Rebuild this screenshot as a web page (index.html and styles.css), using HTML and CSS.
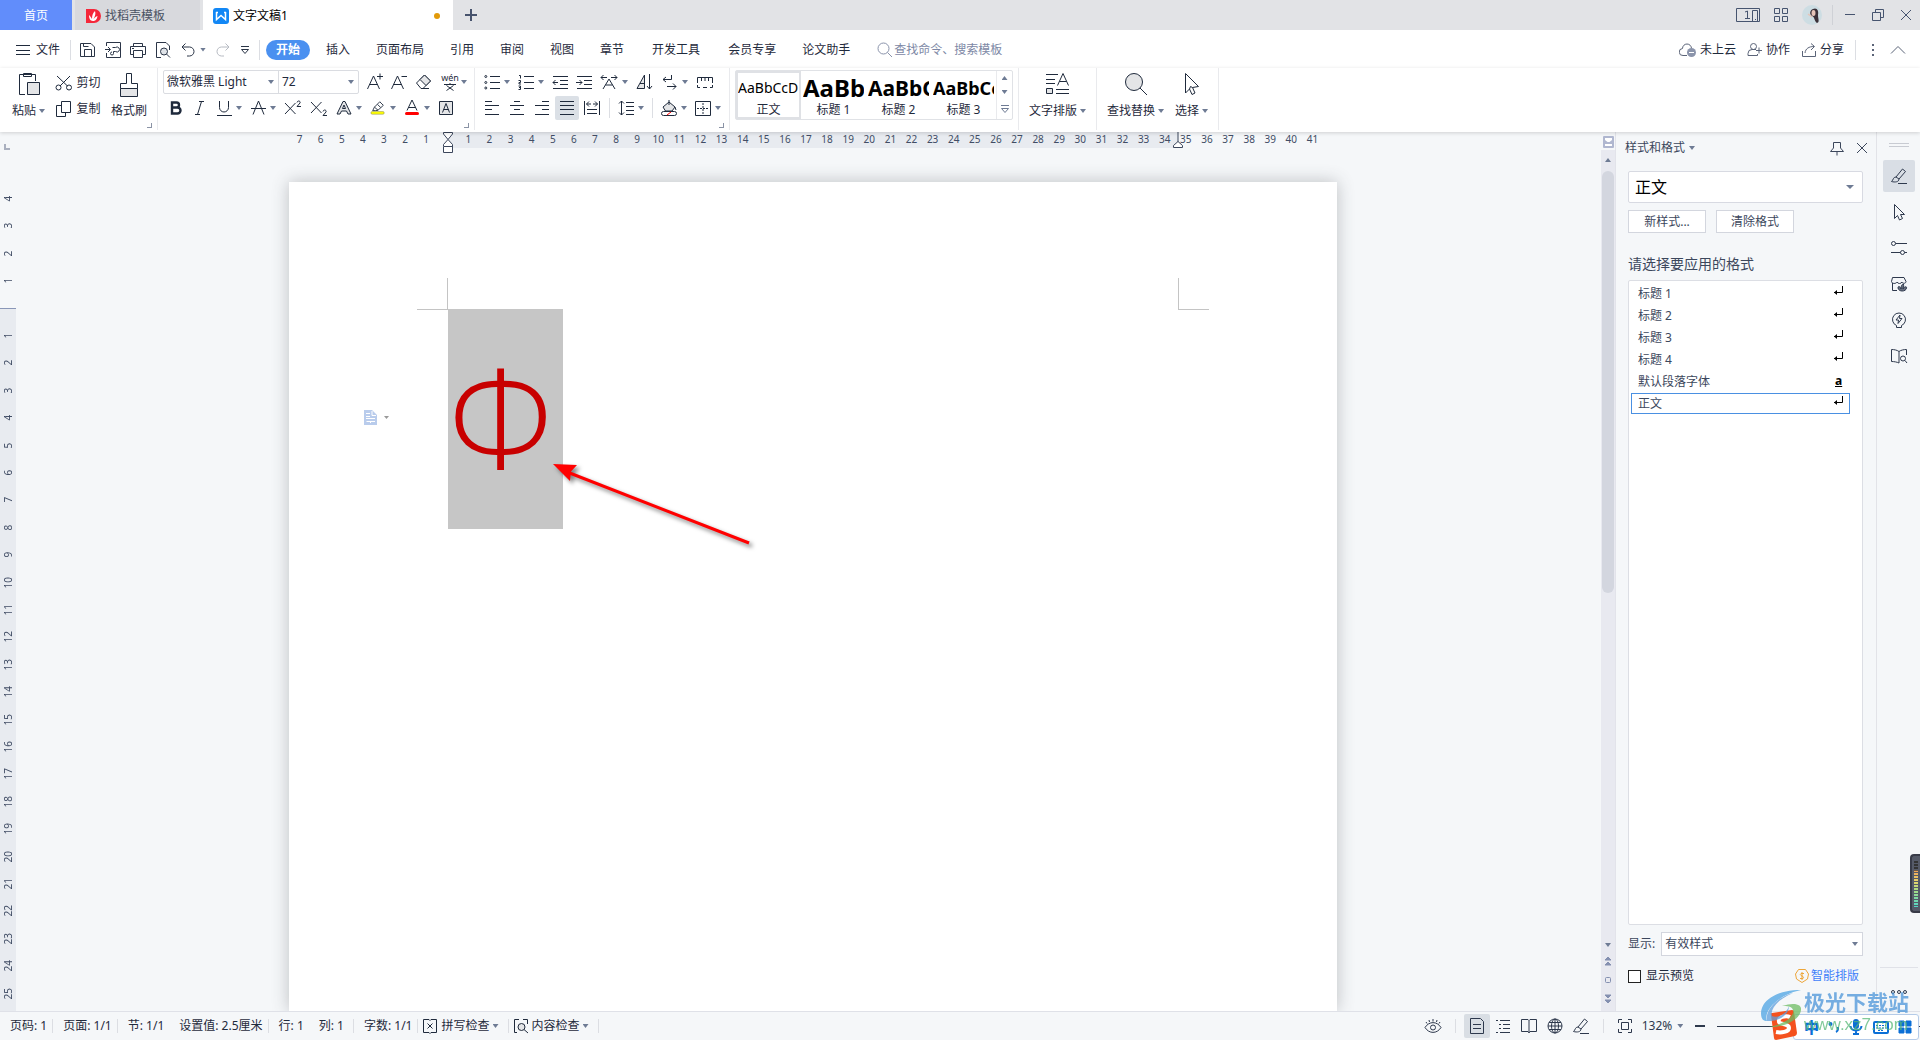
FILE: index.html
```html
<!DOCTYPE html>
<html lang="zh-CN">
<head>
<meta charset="utf-8">
<title>文字文稿1</title>
<link rel="stylesheet" href="styles.css">
</head>
<body>
<svg class="sprite" aria-hidden="true">
  <symbol id="save" viewBox="0 0 16 16"><path d="M.5 14.500V1.500H11L14.500 5V14.500zM4.500 14V7.500H11.500V14M3.500 1.500V4.500H8.500"/></symbol>
  <symbol id="pdf" viewBox="0 0 16 16"><path d="M1.500 4V.5H15.500V15.500H1.500V11M0 7.500H5M3 5L5.500 7.500 3 10M7.500 5.500H10.500A2.500 2.500 0 1 1 10.500 9.500H8.500V11.500A1.500 1.500 0 1 1 7 10"/></symbol>
  <symbol id="print" viewBox="0 0 16 16"><path d="M3.500 4.500V1.500H12.500V4.500M3.500 12.500H.5V4.500H15.500V12.500H12.500M3.500 8.500H12.500V15.500H3.500zM2 6.500H4"/></symbol>
  <symbol id="preview" viewBox="0 0 16 16"><path d="M6 15.500H1.500V.5H11L14.500 4V8M11.500 12L15 15.500"/><circle cx="9" cy="9.500" r="3.500" fill="#dfe3e8"/></symbol>
  <symbol id="undo" viewBox="0 0 16 16"><path d="M5.500 1.500L2 5 5.500 8.500M2 5H9.500A4.500 4.500 0 0 1 9.500 14H7"/></symbol>
  <symbol id="redo" viewBox="0 0 16 16"><path d="M10.500 1.500L14 5 10.500 8.500M14 5H6.500A4.500 4.500 0 0 0 6.500 14H9"/></symbol>
  <symbol id="more" viewBox="0 0 10 10"><path d="M1 1.500H9M1.500 4.500H8.500L5 8.500z"/></symbol>
  <symbol id="search" viewBox="0 0 16 16"><circle cx="6.500" cy="6.500" r="5.500"/><path d="M10.500 10.500L15 15"/></symbol>
  <symbol id="menu" viewBox="0 0 16 16"><path d="M1 3.500H15M1 8.500H15M1 12.500H15"/></symbol>
  <symbol id="cloud" viewBox="0 0 18 16"><path d="M8 13.500H4A3.500 3.500 0 0 1 3.500 6.500 4.500 4.500 0 0 1 12.500 6.500"/><circle cx="12.500" cy="10.500" r="4.500" fill="#8b94ab" stroke="none"/><path d="M10 10.500H15" stroke="#fff"/></symbol>
  <symbol id="collab" viewBox="0 0 16 16"><circle cx="6.500" cy="4.500" r="3"/><path d="M9 7.500H5A4 4 0 0 0 1 11.500V13.500H10.500V12M9 8.500H15M12 5.500V11.500"/></symbol>
  <symbol id="share" viewBox="0 0 16 16"><path d="M1.500 9V14.500H14.500V9M4 11C4.500 6.500 8 4.500 13 4.500M10 1.500L13.500 4.500 10 8"/></symbol>
  <symbol id="up" viewBox="0 0 16 16"><path d="M1 11.500L8 4.500 15 11.500"/></symbol>
  <symbol id="paste" viewBox="0 0 24 24"><path d="M8 22.500H2.500V2.500H18.500V9M6.500 1.500H14.500V4.500H6.500z"/><path d="M10.500 10.500H22.500V22.500H10.500z" fill="#e4e5e7"/></symbol>
  <symbol id="cut" viewBox="0 0 18 18"><path d="M2 2L12.500 12M15 2L5 12"/><circle cx="3.500" cy="13.500" r="2.500"/><circle cx="14" cy="13.500" r="2.500"/></symbol>
  <symbol id="copy" viewBox="0 0 16 16"><path d="M5.500.5H14.500V11.500H5.500zM5.500 4.500H.5V15.500H9.500V11.500"/></symbol>
  <symbol id="brush" viewBox="0 0 20 26"><path d="M7.500 1.500H12.500V11.500H18.500V16.500H1.500V11.500H7.500z"/><path d="M1.500 16.500H18.500V24.500H1.500z" fill="#e4e5e7"/></symbol>
  <symbol id="grow" viewBox="0 0 16 18"><path d="M.5 16L6.500 3 12.500 16M2.500 11.500H10.500M10 3.500H16M13 .5V6.500"/></symbol>
  <symbol id="shrink" viewBox="0 0 16 18"><path d="M.5 16L6.500 3 12.500 16M2.500 11.500H10.500M10.500 3.500H16"/></symbol>
  <symbol id="eraser" viewBox="0 0 18 18"><path d="M1.500 10L9.500 2 15.500 8 8 15.500H6z"/><path d="M5 6.500L9.500 2 15.500 8 11 12.500z" fill="#e4e5e7"/><path d="M8 15.500H14"/></symbol>
  <symbol id="bold" viewBox="0 0 16 16"><path d="M4 2.500H8.500A2.500 2.500 0 0 1 8.500 7.500H4zM4 7.500H9.500A3 3 0 0 1 9.500 13.500H4z" stroke-width="2.400"/></symbol>
  <symbol id="italic" viewBox="0 0 16 16"><path d="M7 1.500H12M3 14.500H8M9.500 1.500L5.500 14.500"/></symbol>
  <symbol id="under" viewBox="0 0 16 16"><path d="M3.500 1V7.500A4.500 4.500 0 0 0 12.500 7.500V1M1 15.500H16"/></symbol>
  <symbol id="strike" viewBox="0 0 16 16"><path d="M8.500 1L3 14.500M8.500 1L14 14.500M1 8.500H16"/></symbol>
  <symbol id="sup" viewBox="0 0 18 16"><path d="M1 3L11.500 14M11.500 3L1 14M13 2.500C13.500 0 17 1 16 3L13 6.500H17"/></symbol>
  <symbol id="sub" viewBox="0 0 18 16"><path d="M1 2L11.500 13M11.500 2L1 13M13 11.500C13.500 9 17 10 16 12L13 15.500H17"/></symbol>
  <symbol id="outline" viewBox="0 0 16 16"><path d="M1 14L7 1.500H9L15 14H12L10.500 11H5.500L4 14zM6.500 8.500H9.500L8 5z" fill="#e4e5e7"/></symbol>
  <symbol id="mark" viewBox="0 0 18 16"><path d="M3 11L5 7 11 1 15 5 9 10.500 6 11zM5 7L9 10.500M8.500 4L12 7.500"/><rect x="1" y="12" width="15" height="3" rx="1.500" fill="#ff0" stroke="#8b8b66" stroke-width=".6"/></symbol>
  <symbol id="color" viewBox="0 0 16 16"><path d="M3 10.500L8 0 13 10.500M4.500 7.500H11.500"/><rect x="1" y="12" width="14" height="3" rx="1.500" fill="red" stroke="none"/></symbol>
  <symbol id="shade" viewBox="0 0 16 16"><path d="M1.500 1.500H14.500V14.500H1.500z" fill="#e4e5e7"/><path d="M4.500 12.500L8 3.500 11.500 12.500M5.500 9.500H10.500"/></symbol>
  <symbol id="bullets" viewBox="0 0 16 16"><path d="M6 2.500H16M6 8.500H16M6 14.500H16"/><circle cx="1.800" cy="2.500" r="1"/><circle cx="1.800" cy="8.500" r="1"/><circle cx="1.800" cy="14" r="1"/></symbol>
  <symbol id="numbers" viewBox="0 0 16 16"><path d="M6 2.500H16M6 8.500H16M6 14.500H16M1 1.500H2.500V4.500M.5 6.500H2.500V8.500H1V10H3M.5 12H2.500V15.500H.5M1 13.500H2.500"/></symbol>
  <symbol id="outdent" viewBox="0 0 16 16"><path d="M1 2.500H16M8 6.500H16M8 10.500H16M1 14.500H16M1 8.500H6M3.500 6L1 8.500 3.500 11"/></symbol>
  <symbol id="indent" viewBox="0 0 16 16"><path d="M1 2.500H16M8 6.500H16M8 10.500H16M1 14.500H16M0 8.500H6M3.500 6L6 8.500 3.500 11"/></symbol>
  <symbol id="scale" viewBox="0 0 18 16"><path d="M3 15L9 5 15 15M5.500 11H12.500M1 3.500H7M3.500 1L1 3.500 3.500 6M11 3.500H17M14.500 1L17 3.500 14.500 6"/></symbol>
  <symbol id="sort" viewBox="0 0 18 16"><path d="M1 14.500L8.500 1V14.500zM4 9.500H8.500" fill="#e4e5e7"/><path d="M13.500 0V15M11 12L13.500 15 16 12"/></symbol>
  <symbol id="wrap" viewBox="0 0 16 16"><path d="M9.500 1V5.500H1M4 3L1 5.500 4 8M5 12.500H14M11 9.500L14 12.500 11 15.500"/></symbol>
  <symbol id="tabs" viewBox="0 0 18 16"><path d="M1.500 9V3.500H16.500V9M5.500 4V7M9 4V7M12.500 4V7M1.500 11V13.500H4M7 13.500H11M14 13.500H16.500V11"/></symbol>
  <symbol id="left" viewBox="0 0 16 16"><path d="M1 1.500H8M1 5.500H15M1 9.500H8M1 14.500H15"/></symbol>
  <symbol id="center" viewBox="0 0 16 16"><path d="M5 1.500H11M1 5.500H15M5 9.500H11M1 14.500H15"/></symbol>
  <symbol id="right" viewBox="0 0 16 16"><path d="M8 1.500H15M1 5.500H15M8 9.500H15M1 14.500H15"/></symbol>
  <symbol id="justify" viewBox="0 0 16 16"><path d="M1 1.500H15M1 5.500H15M1 9.500H15M1 14.500H15"/></symbol>
  <symbol id="distribute" viewBox="0 0 16 16"><path d="M.5 1V15M15.500 1V15M3 9.500H13M3 13.500H13M2.500 4H7M5 1.500L2.500 4 5 6.500M9 4H13.500M11 1.500L13.500 4 11 6.500"/></symbol>
  <symbol id="spacing" viewBox="0 0 16 16"><path d="M8 2.500H16M8 6.500H16M8 10.500H16M8 14.500H16M3.500 1V15M1 3.500L3.500 1 6 3.500M1 12.500L3.500 15 6 12.500"/></symbol>
  <symbol id="bucket" viewBox="0 0 16 16"><path d="M2 7L8 2 14 7 11 11H4.500zM8 5V0M14 7L15 10" fill="#e4e5e7"/><rect x=".5" y="11.500" width="15" height="4" rx="2" fill="#fff"/><path d="M6 15L10 12" stroke="red"/></symbol>
  <symbol id="border" viewBox="0 0 16 16"><path d="M.5 1.500H15.500V15.500H.5z"/><path d="M8 3V14M2 8.500H14" stroke-dasharray="2 1"/></symbol>
  <symbol id="typeset" viewBox="0 0 26 24"><path d="M1 2.500H13M1 7.500H10M1 11.500H10M12.500 13.500L18 1.500 23.500 13.500M14.500 9.500H21.500M11 17.500H24M11 21.500H24"/><path d="M1.500 16.500H7.500V21.500H1.500z" fill="#e4e5e7"/></symbol>
  <symbol id="find" viewBox="0 0 24 24"><circle cx="10" cy="10" r="8.500" fill="#e4e5e7"/><path d="M16 16L23 23"/></symbol>
  <symbol id="select" viewBox="0 0 18 24"><path d="M2.500 1.500V21L6.500 17 9 22.500 12 21 9.500 15.500 15.500 14.500z" fill="#fff"/><path d="M6.500 17L7.500 14.500 9.500 15.500"/></symbol>
  <symbol id="pin" viewBox="0 0 16 16"><path d="M4.500 2.500H11.500V8L14.500 11.500H1.500L4.500 8zM8 11.500V15.500"/></symbol>
  <symbol id="close" viewBox="0 0 12 12"><path d="M1 1L11 11M11 1L1 11"/></symbol>
  <symbol id="enter" viewBox="0 0 12 10"><path d="M9.500 0V6.500H1"/><path d="M1 6.500L4 4V9z" fill="#000" stroke="none"/></symbol>
  <symbol id="pen" viewBox="0 0 18 18"><path d="M6 10L12.500 2 15.500 4.500 9 12M6 10C3 10 3.500 13 1.500 14.500 5 15.500 9 15 9 12zM8 16.500H17"/></symbol>
  <symbol id="pointer" viewBox="0 0 18 18"><path d="M4.500 1.500V15.500L7.500 12.500 9.500 17 12.500 15.500 10.500 11.500H14.500z"/></symbol>
  <symbol id="sliders" viewBox="0 0 18 18"><circle cx="3.500" cy="4.500" r="2"/><circle cx="12.500" cy="13.500" r="2"/><path d="M5.500 4.500H17M1 13.500H10.500M14.500 13.500H17"/></symbol>
  <symbol id="shop" viewBox="0 0 18 18"><path d="M2.500 8V15.500H7M2.500 2.500H14L16 6.500C16 8.500 13 9 12 7 11 9 8 9 7 7 6 9 2 9 1.500 6.500z"/><path d="M8 13C8 10.500 10 11 11 14 11 10 12.500 9 13.500 9 14 11 13 13 13 14 14 11.500 17 11 16.500 13 16 17 8.500 17 8 13z" fill="#6a7180"/></symbol>
  <symbol id="bulb" viewBox="0 0 18 18"><path d="M6.500 14.500A6.500 6.500 0 1 1 11.500 14.500V16.500H6.500zM10 4L6 9H8.500L8 12.500 12 7.500H9.500z"/></symbol>
  <symbol id="booksearch" viewBox="0 0 18 18"><path d="M9 4.500C7 3 4 2.500 1.500 2.500V14.500C4 14.500 7 15 9 16V4.500C11 3 14 2.500 16.500 2.500V8"/><circle cx="13" cy="11.500" r="2.500"/><path d="M15 13.500L17 16"/></symbol>
  <symbol id="spell" viewBox="0 0 16 16"><path d="M7 1.500H1.500V14.500H7L8 15.500 9 14.500H14.500V1.500H9L8 2.500zM5.500 5.500L10.500 10.500M10.500 5.500L5.500 10.500"/></symbol>
  <symbol id="check" viewBox="0 0 16 16"><path d="M4 14.500H1.500V1.500H6M10 1.500H14.500V6M11 11.500L15 15"/><circle cx="8.500" cy="9" r="3.500" fill="#e4e5e7"/></symbol>
  <symbol id="eye" viewBox="0 0 18 16"><path d="M1 9.500C5 3 13 3 17 9.500 13 16 5 16 1 9.500zM2 4L3 5.500M9 1V3.500M16 4L15 5.500M5 2L5.500 4M13 2L12.500 4"/><circle cx="9" cy="9.500" r="2.500"/></symbol>
  <symbol id="doc" viewBox="0 0 16 16"><path d="M1.500.5H11.500L14.500 3.500V15.500H1.500zM4 6.500H12M4 10.500H12"/></symbol>
  <symbol id="list" viewBox="0 0 16 16"><path d="M1 2.500H3M5 2.500H15M4 6.500H6M8 6.500H15M4 10.500H6M8 10.500H15M1 14.500H3M5 14.500H15"/></symbol>
  <symbol id="book" viewBox="0 0 16 16"><path d="M8 2.500L7 1.500H.5V13.500H7L8 15 9 13.500H15.500V1.500H9zV14"/></symbol>
  <symbol id="globe" viewBox="0 0 16 16"><circle cx="8" cy="8" r="7"/><ellipse cx="8" cy="8" rx="3.500" ry="7"/><path d="M1 8H15M2 4.500H14M2 11.500H14M8 1V15"/></symbol>
  <symbol id="fit" viewBox="0 0 16 16"><path d="M1.500 5V1.500H5M11 1.500H14.500V5M14.500 11V14.500H11M5 14.500H1.500V11M4.500 4.500H11.500V11.500H4.500z"/></symbol>
</svg>

<div class="app">
  <header class="titlebar">
    <button class="tab home">首页</button>
    <button class="tab docer"><svg class="i16" viewBox="0 0 16 16"><path d="M1 1H9A7 7 0 0 1 9 15H1z" fill="#f5273a" stroke="none"/><path d="M4 7C5 8 6 9 7 11 7 7 8 5 10 3 11 6 10 8 8.500 11 10 9 12 8 12.500 8 12 12 10 13 8 13 5 13 4 10 4 7z" fill="#fff" stroke="none"/></svg>找稻壳模板</button>
    <button class="tab current"><svg class="i16" viewBox="0 0 16 16"><rect width="16" height="16" rx="3" fill="#1287f5" stroke="none"/><path d="M3.500 4V11.500L8 7.500 12.500 11.500V4M3 4.500H5M11 4.500H13" stroke="#fff" stroke-width="1.500"/></svg>文字文稿1<i class="dirty"></i></button>
    <button class="plus" aria-label="新建"><svg class="i12" viewBox="0 0 12 12"><path d="M6 0V12M0 6H12" stroke-width="2"/></svg></button>
    <div class="window">
      <svg width="24" height="14" viewBox="0 0 24 14"><path d="M.5.5H23.500V13.500H.5zM16.500 13V2.500H21.500V13M19 11.500H20M9 4L11.500 3V10.500M9 10.500H14"/></svg>
      <svg class="grid" width="14" height="14" viewBox="0 0 14 14"><path d="M.5.5H5.500V5.500H.5zM8.500.5H13.500V5.500H8.500zM.5 8.500H5.500V13.500H.5zM8.500 8.500H13.500V13.500H8.500z"/></svg>
      <svg width="20" height="20" viewBox="0 0 20 20"><circle cx="10" cy="10" r="10" fill="#cddde3" stroke="none"/><path d="M11 4C15 2 17 6 16 10 16 14 18 17 15 18 12 16 13 12 10 11 7 9 8 5 11 4z" fill="#3a3038" stroke="none"/><ellipse cx="11.500" cy="8" rx="2" ry="3" fill="#e6c4b8" stroke="none"/><path d="M6 9L10 12" stroke="#e6c4b8" stroke-width="1.500"/></svg>
      <div class="controls">
        <button aria-label="最小化"><svg class="i12" viewBox="0 0 12 12"><path d="M1 5.500H11"/></svg></button>
        <button aria-label="还原"><svg class="i12" viewBox="0 0 12 12"><path d="M3.500 3.500V.5H11.500V8.500H8.500M.5 3.500H8.500V11.500H.5z"/></svg></button>
        <button aria-label="关闭"><svg class="i12"><use href="#close"/></svg></button>
      </div>
    </div>
  </header>

  <nav class="menubar">
    <button class="file"><svg class="i16"><use href="#menu"/></svg>文件</button>
    <i class="bar"></i>
    <div class="quick">
      <button aria-label="保存"><svg class="i16"><use href="#save"/></svg></button>
      <button aria-label="输出为PDF"><svg class="i16"><use href="#pdf"/></svg></button>
      <button aria-label="打印"><svg class="i16"><use href="#print"/></svg></button>
      <button aria-label="打印预览"><svg class="i16"><use href="#preview"/></svg></button>
      <button aria-label="撤销"><svg class="i16"><use href="#undo"/></svg><i class="caret"></i></button>
      <button class="off" aria-label="恢复"><svg class="i16"><use href="#redo"/></svg></button>
      <button aria-label="更多"><svg width="10" height="10"><use href="#more"/></svg></button>
    </div>
    <i class="bar"></i>
    <div class="tabs">
      <button class="on">开始</button><button>插入</button><button>页面布局</button><button>引用</button><button>审阅</button><button>视图</button><button>章节</button><button class="roomy">开发工具</button><button>会员专享</button><button>论文助手</button>
    </div>
    <label class="search"><svg class="i16"><use href="#search"/></svg><input type="text" placeholder="查找命令、搜索模板" aria-label="查找命令"></label>
    <div class="cloud">
      <button><svg width="18" height="16"><use href="#cloud"/></svg>未上云</button>
      <button><svg class="i16"><use href="#collab"/></svg>协作</button>
      <button><svg class="i16"><use href="#share"/></svg>分享</button>
      <i class="bar"></i>
      <button class="dots" aria-label="选项"><i></i><i></i><i></i></button>
      <button aria-label="折叠功能区"><svg class="i16"><use href="#up"/></svg></button>
    </div>
  </nav>

  <section class="ribbon">
    <div class="group clip">
      <button class="big"><svg class="i24"><use href="#paste"/></svg><span>粘贴<i class="caret"></i></span></button>
      <div class="stack"><button><svg width="18" height="18"><use href="#cut"/></svg>剪切</button><button><svg width="18" height="16"><use href="#copy"/></svg>复制</button></div>
      <button class="big"><svg width="20" height="26"><use href="#brush"/></svg><span>格式刷</span></button>
      <i class="launch"></i>
    </div>
    <div class="group font">
      <div class="row">
        <div class="combos">
          <span class="pick name"><select aria-label="字体"><option>微软雅黑 Light</option></select></span>
          <span class="pick size"><select aria-label="字号"><option>72</option></select></span>
        </div>
        <button class="tool" aria-label="增大字号"><svg width="16" height="18"><use href="#grow"/></svg></button>
        <button class="tool" aria-label="减小字号"><svg width="16" height="18"><use href="#shrink"/></svg></button>
        <button class="tool" aria-label="清除格式"><svg class="i18"><use href="#eraser"/></svg></button>
        <button class="tool pin" aria-label="拼音指南"><span class="pinyin"><b>wén</b><svg width="12" height="8" viewBox="0 0 12 8"><path d="M6 0V1.500M0 1.500H12M2.500 2.500L9.500 7.500M9.500 2.500L2.500 7.500"/></svg></span><i class="caret"></i></button>
      </div>
      <div class="row second">
        <button class="tool" aria-label="加粗"><svg class="i16"><use href="#bold"/></svg></button>
        <button class="tool" aria-label="倾斜"><svg class="i16"><use href="#italic"/></svg></button>
        <button class="tool" aria-label="下划线"><svg class="i16"><use href="#under"/></svg><i class="caret"></i></button>
        <button class="tool" aria-label="删除线"><svg class="i16"><use href="#strike"/></svg><i class="caret"></i></button>
        <button class="tool" aria-label="上标"><svg width="18" height="16"><use href="#sup"/></svg></button>
        <button class="tool" aria-label="下标"><svg width="18" height="16"><use href="#sub"/></svg></button>
        <button class="tool" aria-label="文字效果"><svg class="i16"><use href="#outline"/></svg><i class="caret"></i></button>
        <button class="tool" aria-label="突出显示"><svg class="i16"><use href="#mark"/></svg><i class="caret"></i></button>
        <button class="tool" aria-label="字体颜色"><svg class="i16"><use href="#color"/></svg><i class="caret"></i></button>
        <button class="tool" aria-label="字符底纹"><svg class="i16"><use href="#shade"/></svg></button>
      </div>
      <i class="launch"></i>
    </div>
    <div class="group para">
      <div class="row inset">
        <button class="tool" aria-label="项目符号"><svg class="i16"><use href="#bullets"/></svg><i class="caret"></i></button>
        <button class="tool" aria-label="编号"><svg class="i16"><use href="#numbers"/></svg><i class="caret"></i></button>
        <button class="tool" aria-label="减少缩进"><svg class="i16"><use href="#outdent"/></svg></button>
        <button class="tool" aria-label="增加缩进"><svg class="i16"><use href="#indent"/></svg></button>
        <button class="tool" aria-label="中文版式"><svg width="18" height="16"><use href="#scale"/></svg><i class="caret"></i></button>
        <button class="tool" aria-label="排序"><svg width="18" height="16"><use href="#sort"/></svg></button>
        <button class="tool" aria-label="换行"><svg class="i16"><use href="#wrap"/></svg><i class="caret"></i></button>
        <button class="tool" aria-label="制表位"><svg width="18" height="16"><use href="#tabs"/></svg></button>
      </div>
      <div class="row">
        <div class="aligns">
          <button aria-label="左对齐"><svg class="i16"><use href="#left"/></svg></button>
          <button aria-label="居中"><svg class="i16"><use href="#center"/></svg></button>
          <button aria-label="右对齐"><svg class="i16"><use href="#right"/></svg></button>
          <button class="on" aria-label="两端对齐"><svg class="i16"><use href="#justify"/></svg></button>
          <button aria-label="分散对齐"><svg class="i16"><use href="#distribute"/></svg></button>
          <i class="bar"></i>
        </div>
        <button class="tool" aria-label="行距"><svg class="i16"><use href="#spacing"/></svg><i class="caret"></i></button>
        <i class="bar"></i>
        <button class="tool" aria-label="底纹颜色"><svg class="i16"><use href="#bucket"/></svg><i class="caret"></i></button>
        <button class="tool" aria-label="边框"><svg class="i16"><use href="#border"/></svg><i class="caret"></i></button>
      </div>
      <i class="launch"></i>
    </div>
    <div class="group styles">
      <div class="gallery">
        <button class="on"><span class="p0">AaBbCcD</span>正文</button>
        <button><span class="p1">AaBb</span>标题 1</button>
        <button><span class="p2">AaBbC</span>标题 2</button>
        <button><span class="p3">AaBbCc</span>标题 3</button>
        <div class="scroller"><i class="caret flip"></i><i class="caret"></i><svg width="10" height="10"><use href="#more"/></svg></div>
      </div>
    </div>
    <div class="group"><button class="big"><svg width="26" height="24"><use href="#typeset"/></svg><span>文字排版<i class="caret"></i></span></button></div>
    <div class="group"><button class="big"><svg class="i24"><use href="#find"/></svg><span>查找替换<i class="caret"></i></span></button><button class="big"><svg width="18" height="24"><use href="#select"/></svg><span>选择<i class="caret"></i></span></button></div>
  </section>

  <main class="workspace">
    <aside class="vruler">
      <i class="corner"></i>
      <div class="vticks"><b>4</b><b>3</b><b>2</b><b>1</b><b></b><b>1</b><b>2</b><b>3</b><b>4</b><b>5</b><b>6</b><b>7</b><b>8</b><b>9</b><b>10</b><b>11</b><b>12</b><b>13</b><b>14</b><b>15</b><b>16</b><b>17</b><b>18</b><b>19</b><b>20</b><b>21</b><b>22</b><b>23</b><b>24</b><b>25</b></div>
    </aside>
    <section class="editor">
      <div class="hruler">
        <div class="hticks"><b>7</b><b>6</b><b>5</b><b>4</b><b>3</b><b>2</b><b>1</b><b></b><b>1</b><b>2</b><b>3</b><b>4</b><b>5</b><b>6</b><b>7</b><b>8</b><b>9</b><b>10</b><b>11</b><b>12</b><b>13</b><b>14</b><b>15</b><b>16</b><b>17</b><b>18</b><b>19</b><b>20</b><b>21</b><b>22</b><b>23</b><b>24</b><b>25</b><b>26</b><b>27</b><b>28</b><b>29</b><b>30</b><b>31</b><b>32</b><b>33</b><b>34</b><b>35</b><b>36</b><b>37</b><b>38</b><b>39</b><b>40</b><b>41</b></div>
        <svg class="first" width="10" height="22" viewBox="0 0 10 22"><path d="M.5.5H9.500V2L5 7.500.5 2zM.5 14V12.500L5 7.500 9.500 12.500V14.500H.5V20.500H9.500V14" fill="#fff"/></svg>
        <svg class="last" width="10" height="16" viewBox="0 0 10 16"><path d="M5 0V10"/><path d="M.5 15.500V13.500L5 9.500 9.500 13.500V15.500z" fill="#fff"/></svg>
      </div>
      <article class="page">
        <i class="crop tl"></i><i class="crop tr"></i>
        <svg class="pasteopt" width="26" height="16" viewBox="0 0 26 16"><path d="M0 0H8L13 5V15H0z" fill="#b9ccec" stroke="none"/><path d="M2 3.500H6M2 6.500H6M2 8.500H11M2.500 11.500H11M6.500 11V13M8 1V5.500H12" stroke="#fff"/><path d="M20 6H25L22.500 9z" fill="#999" stroke="none"/></svg>
        <p class="text"><span class="picked">Ф</span></p>
        <svg class="arrow" width="210" height="100" viewBox="0 0 210 100"><path d="M14 14L201 87" stroke="#f00" stroke-width="3"/><path d="M5 8L29 9 23 15.500 22 25z" fill="#f00" stroke="none"/></svg>
      </article>
    </section>
    <div class="vscroll">
      <svg width="11" height="12" viewBox="0 0 11 12"><rect width="11" height="12" rx="1" fill="#b0b7d0" stroke="none"/><path d="M2 2H9V4L6.500 6H4.500L2 4zM2 8H9V10H2z" fill="#fff" stroke="none"/></svg>
      <div class="track"><i class="caret flip"></i><i class="thumb"></i><i class="caret"></i>
        <svg class="i10" viewBox="0 0 10 10"><path d="M2 4L5 1 8 4zM2 9L5 6 8 9z" fill="#8490b0"/></svg>
        <svg class="i10" viewBox="0 0 10 10"><rect x="2.500" y="2.500" width="5" height="5" rx="1"/></svg>
        <svg class="i10" viewBox="0 0 10 10"><path d="M2 1L5 4 8 1zM2 6L5 9 8 6z" fill="#8490b0"/></svg></div>
    </div>
    <aside class="panel">
      <header><h2>样式和格式<i class="caret"></i></h2><button aria-label="固定"><svg class="i16"><use href="#pin"/></svg></button><button aria-label="关闭窗格"><svg class="i12"><use href="#close"/></svg></button></header>
      <span class="pick current-style"><select aria-label="当前样式"><option>正文</option></select></span>
      <div class="actions"><button>新样式...</button><button>清除格式</button></div>
      <h3>请选择要应用的格式</h3>
      <ul class="stylelist">
        <li>标题 1<svg width="12" height="10"><use href="#enter"/></svg></li>
        <li>标题 2<svg width="12" height="10"><use href="#enter"/></svg></li>
        <li>标题 3<svg width="12" height="10"><use href="#enter"/></svg></li>
        <li>标题 4<svg width="12" height="10"><use href="#enter"/></svg></li>
        <li>默认段落字体<b>a</b></li>
        <li class="on">正文<svg width="12" height="10"><use href="#enter"/></svg></li>
      </ul>
      <div class="show"><label for="show">显示:</label><span class="pick"><select id="show"><option>有效样式</option></select></span></div>
      <div class="foot"><label><input type="checkbox">显示预览</label><a href="#smart"><svg width="14" height="14" viewBox="0 0 14 14"><path d="M3.500.5H10.500L13.500 5 12.500 10 7 13.500 1.500 10 .5 5z" stroke="#eda63a"/><path d="M9 4.500H6Q4.500 5.500 6 6.500L8 7.500Q9 9 8 9.500H5M7 3V11" stroke="#eda63a"/></svg>智能排版</a></div>
    </aside>
    <aside class="rail">
      <i class="grip"></i>
      <button class="on" aria-label="样式"><svg class="i18"><use href="#pen"/></svg></button>
      <button aria-label="选择"><svg class="i18"><use href="#pointer"/></svg></button>
      <button aria-label="属性"><svg class="i18"><use href="#sliders"/></svg></button>
      <button aria-label="稻壳资源"><svg class="i18"><use href="#shop"/></svg></button>
      <button aria-label="推荐"><svg class="i18"><use href="#bulb"/></svg></button>
      <button aria-label="查找"><svg class="i18"><use href="#booksearch"/></svg></button>
      <button class="end" aria-label="更多"><svg class="i18" viewBox="0 0 18 18"><circle cx="3" cy="9" r="1.500"/><circle cx="9" cy="9" r="1.500"/><circle cx="15" cy="9" r="1.500"/></svg></button>
    </aside>
  </main>

  <footer class="status">
    <span class="cut">页码: 1</span><span class="cut">页面: 1/1</span><span>节: 1/1</span><span class="cut">设置值: 2.5厘米</span><span>行: 1</span><span class="cut loose">列: 1</span><span class="cut">字数: 1/1</span>
    <button class="cut"><svg class="i16"><use href="#spell"/></svg>拼写检查<i class="caret"></i></button>
    <button class="cut"><svg class="i16"><use href="#check"/></svg>内容检查<i class="caret"></i></button>
    <div class="views">
      <button aria-label="护眼模式"><svg width="18" height="16"><use href="#eye"/></svg></button>
      <i class="bar"></i>
      <button class="on" aria-label="页面视图"><svg class="i16"><use href="#doc"/></svg></button>
      <button aria-label="大纲"><svg class="i16"><use href="#list"/></svg></button>
      <button aria-label="阅读版式"><svg class="i16"><use href="#book"/></svg></button>
      <button aria-label="Web版式"><svg class="i16"><use href="#globe"/></svg></button>
      <button aria-label="写作模式"><svg class="i18"><use href="#pen"/></svg></button>
      <i class="bar"></i>
      <button aria-label="最佳显示比例"><svg class="i16"><use href="#fit"/></svg></button>
      <button class="zoom">132%<i class="caret"></i></button>
      <button class="minus" aria-label="缩小"><i></i></button>
      <i class="slider"></i>
    </div>
  </footer>
</div>

<div class="meter"></div>
<div class="ime">
  <svg width="30" height="30" viewBox="0 0 30 30"><path d="M3 5Q2 3 4 3L24 0Q26 0 26 2L29 23Q29 25 27 26L8 30Q6 30 6 28z" fill="#f4511e" stroke="none"/><path d="M22 7C18 5 9 7 11 12 12 15 21 13 21 18 21 22 13 23 8 22" stroke="#fff" stroke-width="4"/></svg>
  <div class="keys"><b>中</b>
    <svg class="i12" viewBox="0 0 12 12"><circle cx="2.500" cy="3" r="2" fill="#0b6fd6" stroke="none"/><path d="M10 6V8Q10 10 8 11" stroke="#0b6fd6" stroke-width="2"/></svg>
    <svg class="i16" viewBox="0 0 16 16"><rect x="5" y="0" width="6" height="10" rx="3" fill="#0b6fd6" stroke="none"/><path d="M2.500 7C3 13 13 13 13.500 7M8 12V16M5 15H11" stroke="#0b6fd6" stroke-width="2"/></svg>
    <svg class="i16" viewBox="0 0 16 16"><rect x="1" y="3" width="14" height="11" rx="1" stroke="#0b6fd6" stroke-width="2"/><path d="M3 6.500H13M3 9H13M5 11.500H11" stroke="#0b6fd6" stroke-dasharray="2 1"/></svg>
    <svg width="14" height="14" viewBox="0 0 14 14"><path d="M1 1H6V6H1zM8 1H13V6H8zM1 8H6V13H1zM8 8H13V13H8z" fill="#0b6fd6" stroke="#0b6fd6"/></svg></div>
</div>
<div class="brand">
  <svg width="42" height="42" viewBox="0 0 42 42"><path d="M41 1C20 1 2 9 1 24 1 31 4 32 7 32 3 21 20 5 41 1z" fill="#4ba3e3" stroke="none"/><path d="M33 4C18 10 10 20 12 27 18 30 27 24 29 17 29 27 17 33 7 32 5 20 18 8 33 4z" fill="#5e9fdc" stroke="none"/><path d="M22 17C34 13 42 15 41 21 40 31 23 39 9 38 22 36 35 28 33 21 32 17 27 17 22 17z" fill="#6cbc62" stroke="none"/></svg>
  <div><strong>极光下载站</strong><em>www.xz7.com</em></div>
</div>
</body>
</html>
```
FILE: styles.css
```css
* { box-sizing: border-box; }
body {
  margin: 0;
  font: 12px/16px "Noto Sans", "Noto Sans CJK SC", sans-serif;
  color: #1f2a3c;
  overflow: hidden;
}
button, input, select { font: inherit; color: inherit; border: 0; background: none; padding: 0; margin: 0; border-radius: 0; outline: 0; }
button { display: flex; align-items: center; white-space: nowrap; }
h2, h3, ul, p { margin: 0; padding: 0; font-size: 12px; font-weight: 400; list-style: none; }
i, em { font-style: normal; }
svg { display: block; flex: none; fill: none; stroke: currentColor; }
.sprite { display: none; }
.i10 { width: 10px; height: 10px; }
.i12 { width: 12px; height: 12px; }
.i16 { width: 16px; height: 16px; }
.i18 { width: 18px; height: 18px; }
.i24 { width: 24px; height: 24px; }

.app { display: flex; flex-direction: column; height: 100vh; }
.caret { flex: none; width: 6px; height: 4px; background: #6e7b94; clip-path: polygon(0 0, 100% 0, 50% 100%); }
.caret.flip { transform: scaleY(-1); }
.bar { flex: none; width: 1px; height: 20px; background: #dcdee3; }

/* title bar */
.titlebar { display: flex; height: 30px; background: #e2e3e6; }
.tab { gap: 4px; padding: 2px 10px 0; }
.home { width: 72px; justify-content: center; background: #618dfb; color: #fff; }
.docer { width: 125px; margin: 0 3px; background: #d8d9dd; color: #4a5263; }
.current { width: 250px; background: #fff; color: #000; }
.dirty { width: 6px; height: 6px; margin: 0 3px 0 auto; border-radius: 50%; background: #e29a0a; }
.plus { width: 36px; justify-content: center; color: #47536d; }
.window { display: flex; align-items: center; gap: 10px; margin-left: auto; color: #46546f; }
.window .grid { margin: 0 4px; }
.controls { display: flex; height: 20px; padding-left: 3px; border-left: 1px solid #cfd1d6; }
.controls button { width: 28px; justify-content: center; }

/* menu bar */
.menubar { display: flex; align-items: center; height: 38px; background: #fff; padding: 1px 0 0 15px; }
.file { gap: 5px; margin-right: 10px; }
.quick { display: flex; align-items: center; gap: 9px; padding: 0 9px; color: #2b3547; }
.quick button { gap: 4px; }
.quick .off { color: #b6bac2; }
.tabs { display: flex; align-items: center; gap: 26px; padding-left: 6px; }
.tabs .on { width: 44px; height: 20px; margin-right: -10px; justify-content: center; border-radius: 10px; background: #4a90f0; color: #fff; font-weight: 700; }
.tabs .roomy { padding: 0 2px; }
.search { display: flex; align-items: center; gap: 1px; margin-left: 27px; color: #8a93ab; }
.search input { width: 120px; }
.search input::placeholder { color: #7d88a5; opacity: 1; }
.cloud { display: flex; align-items: center; gap: 11px; margin-left: auto; padding-right: 14px; }
.cloud button { gap: 3px; }
.cloud svg { color: #5b6478; }
.cloud .dots { flex-direction: column; width: 12px; }
.dots i { width: 2px; height: 2px; background: #5b6478; }

/* ribbon */
.ribbon { position: relative; z-index: 2; display: flex; height: 64px; background: #fff; box-shadow: 0 1px 4px rgba(0, 0, 0, .16); }
.group { position: relative; display: flex; height: 62px; padding: 0 10px; border-right: 1px solid #e9eaed; }
.clip { width: 158px; padding: 0 10px 0 12px; justify-content: space-between; }
.big { flex-direction: column; height: 51px; padding-top: 4px; justify-content: space-between; align-items: center; }
.big span { display: flex; align-items: center; gap: 3px; }
.group .big + .big { margin-left: 11px; }
.stack { display: flex; flex-direction: column; gap: 8px; padding-top: 6px; }
.stack button { gap: 3px; height: 18px; }
.launch { position: absolute; right: 5px; bottom: 2px; width: 5px; height: 5px; border: solid #8a93a5; border-width: 0 1px 1px 0; }
.font, .para { flex-direction: column; }
.font { width: 317px; padding: 0 5px; }
.para { width: 255px; padding: 0 5px; }
.row { display: flex; align-items: center; gap: 8px; height: 24px; margin-top: 2px; }
.row.second { padding-left: 5px; }
.row.inset { padding-left: 4px; }
.tool { gap: 4px; }
.tool.pin { gap: 2px; }
.combos { display: flex; height: 24px; border: 1px solid #dadce1; border-radius: 2px; }
.pick { position: relative; display: flex; }
.pick::after { content: ""; position: absolute; right: 4px; top: calc(50% - 2px); width: 6px; height: 4px; background: #6e7b94; clip-path: polygon(0 0, 100% 0, 50% 100%); pointer-events: none; }
.pick select { appearance: none; width: 100%; padding-left: 3px; }
.name { width: 115px; border-right: 1px solid #dadce1; }
.size { width: 79px; }
.pinyin { display: flex; flex-direction: column; align-items: center; width: 18px; }
.pinyin b { font-size: 9px; line-height: 10px; font-weight: 400; }
.aligns { display: flex; align-items: center; gap: 1px; }
.aligns button { width: 24px; height: 24px; justify-content: center; }
.aligns .bar { margin-left: 4px; }
.aligns .on { background: #dbe0e6; border-radius: 2px; }
.styles { padding: 0 5px; }
.gallery { display: flex; height: 50px; margin-top: 2px; border: 1px solid #e0e2e6; border-radius: 2px; }
.gallery button { flex-direction: column; width: 65px; height: 48px; overflow: hidden; justify-content: flex-end; padding-bottom: 1px; }
.gallery button span { width: 61px; overflow: hidden; line-height: 28px; height: 28px; color: #000; text-align: left; }
.gallery .on { box-shadow: inset 0 0 0 2px #dfe1e5; }
.gallery .p0 { font-size: 14px; }
.gallery .p1 { font-size: 24px; font-weight: 700; }
.gallery .p2 { font-size: 21px; font-weight: 700; }
.gallery .p3 { font-size: 18px; font-weight: 700; }
.scroller { display: flex; flex-direction: column; align-items: center; justify-content: space-around; width: 16px; border-left: 1px solid #e9eaed; }
.scroller svg { color: #6e7b94; }

/* workspace */
.workspace { display: flex; flex: 1; min-height: 0; background: #f5f7f9; color: #3c475c; }
.vruler { width: 16px; padding-top: 53px; position: relative; overflow: hidden; background: linear-gradient(#f5f7f9 176px, #8a97b8 176px, #8a97b8 177px, #e8ebf0 177px); }
.corner { position: absolute; left: 4px; top: 12px; width: 6px; height: 6px; border: solid #aab0bf; border-width: 0 0 2px 2px; }
.vticks { display: grid; grid-auto-rows: 1fr; height: 822px; }
.vticks b, .hticks b { display: grid; place-items: center; font-size: 10px; line-height: 14px; font-weight: 400; color: #414d65; }
.vticks b { writing-mode: vertical-rl; transform: rotate(180deg); }
.editor { flex: 1; min-width: 0; padding-left: 9px; display: flex; flex-direction: column; align-items: center; overflow: hidden; }
.hruler { position: relative; flex: none; width: 1048px; height: 16px; margin-bottom: 34px; background: linear-gradient(90deg, transparent 158px, #e8ebf0 158px, #e8ebf0 889px, transparent 889px); }
.hticks { display: grid; grid-auto-flow: column; grid-auto-columns: minmax(0, 1fr); width: 1034px; }
.first, .last { position: absolute; top: 0; }
.first { left: 154px; }
.last { left: 884px; }
.page { position: relative; flex: 1; width: 1048px; padding: 127px 159px 0; background: #fff; box-shadow: 0 0 16px rgba(60, 64, 70, .3); }
.crop { position: absolute; top: 96px; width: 31px; height: 32px; border: 0 solid #c4c4c4; border-bottom-width: 1px; }
.crop.tl { left: 128px; border-right-width: 1px; }
.crop.tr { right: 128px; border-left-width: 1px; }
.pasteopt { position: absolute; left: 75px; top: 228px; }
.text { font: 300 138px/212px "Open Sans", "Noto Sans", sans-serif; color: #c80000; }
.picked { display: inline-block; min-width: 115px; height: 220px; background: #c6c6c6; }
.arrow { position: absolute; left: 259px; top: 274px; filter: drop-shadow(3px 3px 2px rgba(0, 0, 0, .5)); }
.vscroll { display: flex; flex-direction: column; align-items: center; gap: 2px; width: 15px; padding-top: 4px; border-right: 1px solid #e2e3ea; }
.track { display: flex; flex-direction: column; align-items: center; flex: 1; width: 100%; padding: 8px 0 7px; background: #e8e9f0; color: #8490b0; gap: 9px; }
.track .thumb { width: 12px; height: 422px; margin-bottom: auto; border-radius: 6px; background: #d3d6df; }

/* style pane */
.panel { display: flex; flex-direction: column; width: 261px; padding: 8px 13px 26px 12px; border-right: 1px solid #e2e3e8; }
.panel header { display: flex; align-items: center; gap: 11px; height: 16px; margin: 0 -5px 15px -3px; }
.panel h2 { display: flex; align-items: center; gap: 4px; margin-right: auto; }
.current-style { height: 32px; border: 1px solid #d8dae2; border-radius: 2px; background: #fff; font-size: 16px; color: #000; }
.current-style::after { right: 8px; width: 8px; }
.current-style select { padding-left: 6px; }
.actions { display: flex; gap: 10px; margin-top: 7px; }
.actions button { width: 78px; height: 23px; justify-content: center; background: #fff; border: 1px solid #d3d6de; }
.panel h3 { font-size: 14px; line-height: 20px; margin: 21px 0 6px; }
.stylelist { flex: 1; padding: 2px 12px 0 2px; background: #fff; border: 1px solid #dcdee4; border-radius: 2px; }
.stylelist li { display: flex; justify-content: space-between; height: 22px; line-height: 20px; padding: 0 4px 0 6px; border: 1px solid transparent; color: #3c475c; }
.stylelist svg { margin-top: 2px; color: #000; }
.stylelist b { width: 10px; color: #000; text-decoration: underline; line-height: 18px; }
.stylelist .on { border-color: #4a90e2; height: 21px; }
.show { display: flex; align-items: center; gap: 6px; margin-top: 7px; }
.show .pick { flex: 1; height: 24px; background: #fff; border: 1px solid #d3d6de; }
.foot { display: flex; align-items: center; justify-content: space-between; margin-top: 11px; height: 18px; color: #1f2a3c; }
.foot label, .foot a { display: flex; align-items: center; gap: 5px; }
.foot a { gap: 2px; margin-right: 4px; color: #417ff9; text-decoration: none; }
.foot input { appearance: none; width: 13px; height: 13px; border: 1px solid #222; background: #fff; }
.rail { display: flex; flex-direction: column; align-items: center; gap: 4px; width: 43px; padding: 11px 0 4px; color: #2e394d; }
.grip { width: 20px; height: 4px; margin-bottom: 9px; border: solid #c8cbd2; border-width: 1px 0; }
.rail button { width: 32px; height: 32px; justify-content: center; }
.rail .on { background: #d9dee5; border-radius: 2px; }
.rail .end { width: 38px; height: 40px; margin-top: auto; padding-top: 8px; border-top: 1px solid #e0e2e8; }

/* status bar */
.status { display: flex; align-items: center; height: 29px; background: #f5f7f9; border-top: 1px solid #dfe1e8; }
.status > span, .status > button { display: flex; align-items: center; height: 14px; padding: 0 5px 0 10px; white-space: nowrap; }
.status > .cut { border-right: 1px solid #dcdee3; }
.status > .loose { padding-right: 9px; }
.status > button { gap: 3px; padding: 0 9px 0 4px; }
.views { display: flex; align-items: center; margin-left: auto; color: #2e394d; }
.views button { width: 26px; height: 24px; justify-content: center; gap: 5px; }
.views .bar { height: 14px; margin: 0 8px 0 9px; }
.views .on { background: #d9dee4; border-radius: 2px; }
.views .zoom { width: 49px; }
.minus i { width: 10px; height: 2px; background: #2e394d; }
.slider { width: 203px; height: 1px; margin-left: 4px; background: #2e394d; }

/* desktop overlays */
.meter { position: fixed; right: 0; top: 854px; width: 10px; height: 59px; border: 2px solid #383b48; border-right: 0; border-radius: 4px 0 0 4px; background: #555a68; z-index: 5; }
.meter::before { content: ""; display: block; width: 4px; height: 46px; margin: 5px 0 0 2px; background: repeating-linear-gradient(transparent 0 2px, #555a68 2px 3px), linear-gradient(#333 20%, #f0a55a 22%, #e6d56c 45%, #a3dc86 65%, #52d6c8); }
.ime { position: fixed; right: 1px; bottom: 0; display: flex; align-items: flex-end; z-index: 6; }
.keys { display: flex; align-items: center; justify-content: space-between; width: 126px; height: 26px; margin-left: -5px; padding: 0 6px 0 10px; border: 1px solid #b5cbe8; border-radius: 3px; background: #fff; color: #0b6fd6; font-weight: 700; }
.ime > svg { position: relative; z-index: 1; }
.keys b { font-size: 15px; }
.brand { position: fixed; right: 11px; bottom: 5px; display: flex; align-items: center; gap: 2px; opacity: .75; z-index: 7; }
.brand svg { margin-bottom: 4px; }
.brand div { display: flex; flex-direction: column; }
.brand strong { font-size: 21px; line-height: 26px; font-weight: 700; color: #4a94d8; }
.brand em { font: 17px/20px "Liberation Sans", sans-serif; color: #57b877; }
```
